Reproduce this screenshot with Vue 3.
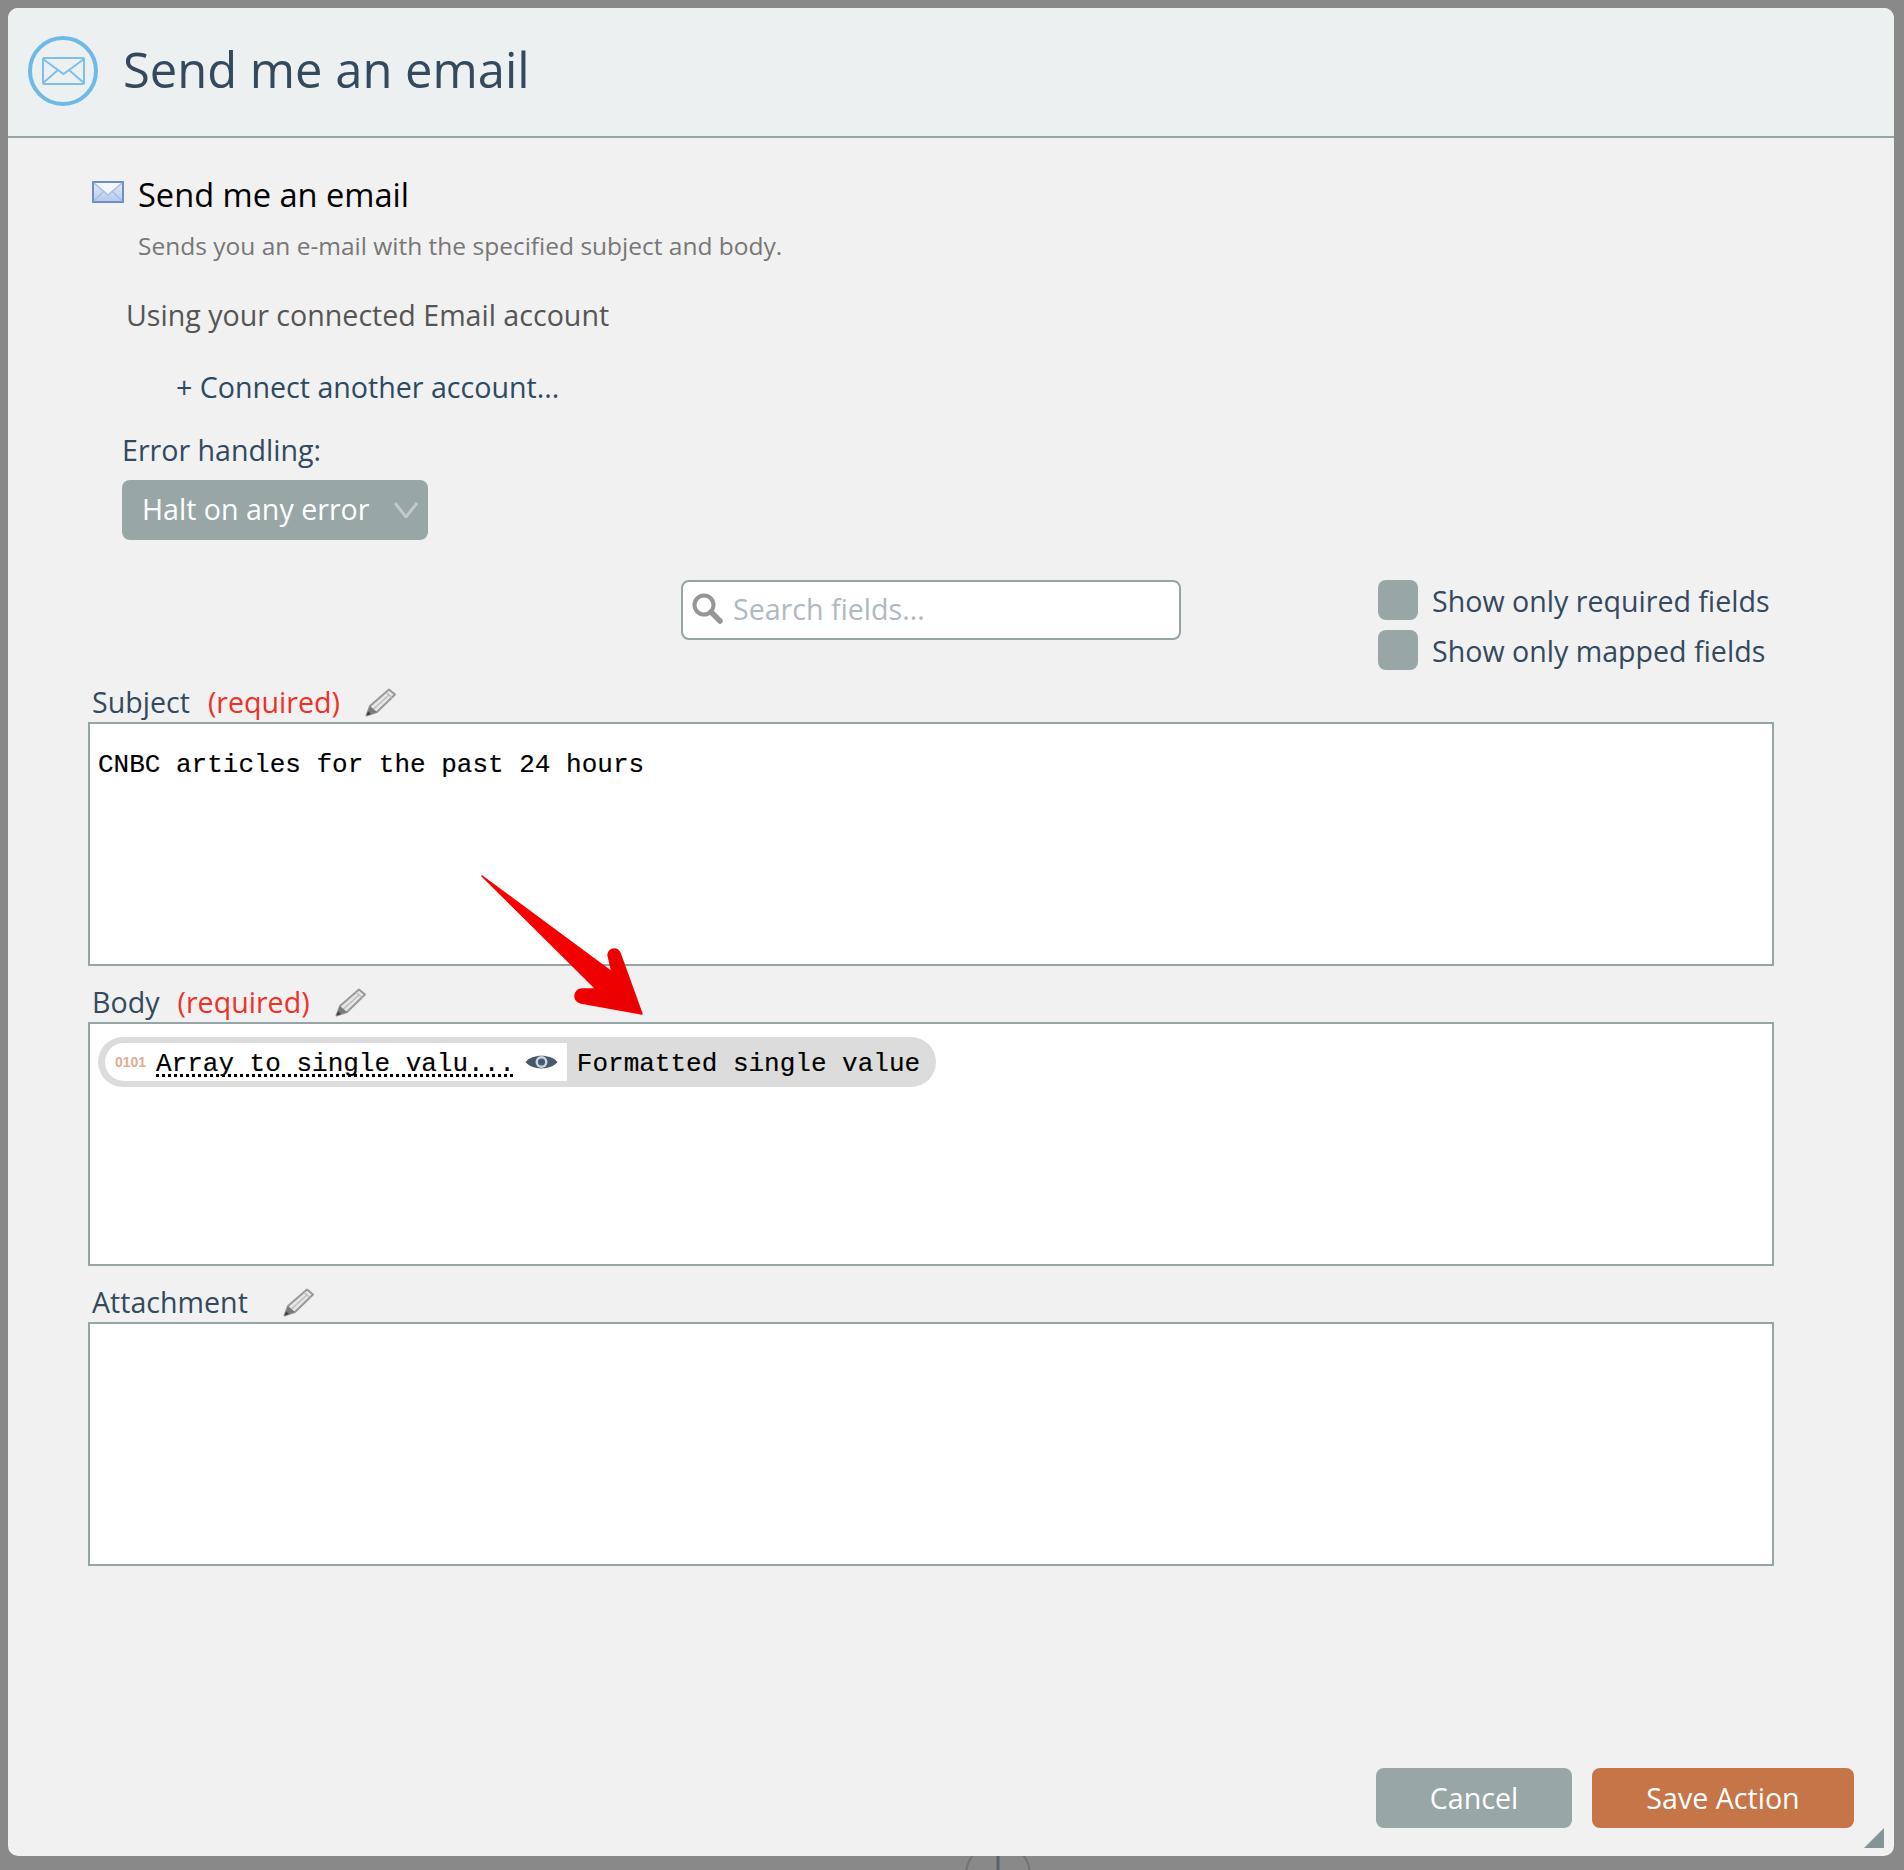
<script setup>
const fields = [
  { name: 'Subject', required: true, text: 'CNBC articles for the past 24 hours' },
  { name: 'Body', required: true, pill: true },
  { name: 'Attachment', required: false },
]
</script>

<template>
  <div class="page">
    <svg class="peek" viewBox="0 0 80 60" aria-hidden="true">
      <circle cx="40" cy="34" r="32" fill="none" stroke="#6d7376" stroke-width="2" />
      <path d="M40 14V40" stroke="#596269" stroke-width="3" />
    </svg>
    <main class="modal">
      <header class="head">
        <span class="head-icon">
          <svg width="43" height="28" viewBox="0 0 43 28" fill="none" stroke="#7cc0ea" stroke-width="2">
            <rect x="1" y="1" width="41" height="26" rx="1" />
            <path d="M1 2 21.500 17 42 2M1 26 16 13M42 26 27 13" />
          </svg>
        </span>
        <h1 class="title">Send me an email</h1>
      </header>

      <div class="action">
        <svg class="env" width="32" height="22" viewBox="0 0 32 22">
          <defs>
            <linearGradient id="envfill" x1="0" y1="0" x2="0" y2="1">
              <stop offset="0" stop-color="#e4ecfb" />
              <stop offset="1" stop-color="#b4c9ee" />
            </linearGradient>
          </defs>
          <rect x="1" y="1" width="30" height="20" fill="url(#envfill)" stroke="#6f8fc4" stroke-width="2" />
          <path d="M2 2 16 14 30 2Z" fill="#f4f7fe" />
          <path d="M2 2 16 14 30 2M2 20 12 10M30 20 20 10" fill="none" stroke="#a5bce6" stroke-width="1.400" />
        </svg>
        <span>Send me an email</span>
      </div>
      <p class="desc">Sends you an e-mail with the specified subject and body.</p>
      <p class="using">Using your connected Email account</p>
      <p class="connect">+ Connect another account...</p>
      <p class="err">Error handling:</p>
      <div class="select">
        <span class="select-text">Halt on any error</span>
        <svg width="24" height="16" viewBox="0 0 24 16" fill="none" stroke="#c3c8c8" stroke-width="3">
          <path d="M1 1 12 15 23 1" />
        </svg>
      </div>

      <div class="tools">
        <div class="search">
          <svg width="31" height="31" viewBox="0 0 31 31" fill="none" class="glass">
            <circle cx="12" cy="12" r="9.500" stroke="#969696" stroke-width="4" />
            <path d="M19 19 28 28" stroke="#969696" stroke-width="5.500" stroke-linecap="round" />
          </svg>
          <input class="search-input" placeholder="Search fields..." />
        </div>
        <div class="checks">
          <label class="check"><span class="box"></span><span class="check-text">Show only required fields</span></label>
          <label class="check"><span class="box"></span><span class="check-text">Show only mapped fields</span></label>
        </div>
      </div>

      <section class="fields">
        <div v-for="f in fields" :key="f.name" class="field">
          <div class="label">
            <span>{{ f.name }}</span>
            <span v-if="f.required" class="req">(required)</span>
            <svg :class="['pencil', { wide: !f.required }]" width="31" height="29" viewBox="0 0 31 29">
              <path d="M24 1.500 30 6.500 12 24 1.500 27.500 5 18Z" fill="#e6e6e6" stroke="#999" stroke-width="2" stroke-linejoin="round" />
              <path d="M21 4.500 27 9.500M8.500 21 24.500 6.500" fill="none" stroke="#bbb" stroke-width="1.400" />
              <path d="M5 18 12 24 1.500 27.500Z" fill="#7a7a7a" />
              <path d="M1.500 27.500 3 23.500 6 26Z" fill="#3c3c3c" />
            </svg>
          </div>
          <div class="input">
            <span v-if="f.text" class="plain">{{ f.text }}</span>
            <span v-if="f.pill" class="pill">
              <span class="pill-in">
                <span class="bits">0101</span>
                <span class="pill-name">Array to single valu...</span>
                <svg class="eye" width="33" height="18" viewBox="0 0 33 18">
                  <path d="M0.500 9C7 0.500 26 0.500 32.500 9 26 17.500 7 17.500 0.500 9Z" fill="#46596f" />
                  <circle cx="16.500" cy="9" r="6" fill="#c9d3dc" />
                  <circle cx="16.500" cy="9" r="3.500" fill="#46596f" />
                </svg>
              </span>
              <span class="pill-out">Formatted single value</span>
            </span>
          </div>
        </div>
      </section>

      <footer class="foot">
        <button class="btn cancel">Cancel</button>
        <button class="btn save">Save Action</button>
      </footer>
      <span class="resize"></span>

      <svg class="arrow" viewBox="470 870 180 150" aria-hidden="true">
        <defs>
          <linearGradient id="arrowfill" x1="0" y1="0" x2="1" y2="1">
            <stop offset="0" stop-color="#ff0000" />
            <stop offset="1" stop-color="#e80000" />
          </linearGradient>
        </defs>
        <path d="M482 876 612 972 608 955Q609 949 614 949 618 949 620 953L642 1014 581 1003Q575 1001 575 996 576 989 582 989L596 989Z" fill="url(#arrowfill)" stroke="#f40000" stroke-width="1.500" stroke-linejoin="round" />
      </svg>
    </main>
  </div>
</template>

<style>
html, body { margin: 0; background: #898989; }
</style>

<style scoped>
.page {
  position: relative;
  height: 1870px;
  box-sizing: border-box;
  padding: 8px 10px 0 8px;
  overflow: hidden;
  font-family: "Open Sans", sans-serif;
  font-size: 28.600px;
  color: #34495e;
}
.peek {
  position: absolute;
  left: 958px;
  top: 1841px;
  width: 80px;
  height: 60px;
}
.modal {
  position: relative;
  display: flex;
  flex-direction: column;
  height: 1848px;
  background: #f1f1f1;
  border-radius: 10px;
}
.head {
  display: flex;
  align-items: center;
  height: 128px;
  padding-left: 20px;
  background: #ecf0f1;
  border-bottom: 2px solid #95a5a6;
  border-radius: 10px 10px 0 0;
}
.head-icon {
  display: flex;
  align-items: center;
  justify-content: center;
  box-sizing: border-box;
  width: 70px;
  height: 70px;
  margin-bottom: 2px;
  border: 4px solid #6fb9e8;
  border-radius: 50%;
}
.title {
  margin: 0 0 6px 25px;
  font-size: 48.900px;
  font-weight: 400;
  line-height: 64px;
  color: #34495e;
}
.action {
  display: flex;
  align-items: center;
  gap: 14px;
  margin-top: 37px;
  padding-left: 84px;
  font-size: 32.600px;
  line-height: 40px;
  color: #000;
}
.env { flex: none; margin-top: -6px; }
.desc {
  margin: 14px 0 0;
  padding-left: 130px;
  font-size: 24.500px;
  line-height: 34px;
  color: #777;
}
.using {
  margin: 32px 0 0;
  padding-left: 118px;
  line-height: 40px;
  color: #555;
}
.connect {
  margin: 32px 0 0;
  padding-left: 168px;
  line-height: 40px;
  color: #2c4a62;
}
.err {
  margin: 23px 0 0;
  padding-left: 114px;
  line-height: 40px;
}
.select {
  display: flex;
  align-items: center;
  justify-content: space-between;
  box-sizing: border-box;
  width: 306px;
  height: 60px;
  margin: 10px 0 0 114px;
  padding: 0 10px 0 20px;
  background: #98a6a6;
  border-radius: 8px;
  color: #fff;
}
.select-text { padding-bottom: 3px; }
.tools {
  display: flex;
  height: 90px;
  margin-top: 40px;
  padding-left: 673px;
}
.search {
  position: relative;
  width: 500px;
  height: 60px;
}
.glass {
  position: absolute;
  left: 11px;
  top: 13px;
}
.search-input {
  box-sizing: border-box;
  width: 100%;
  height: 100%;
  padding: 0 12px 4px 50px;
  background: #fff;
  border: 2px solid #95a5a6;
  border-radius: 8px;
  outline: none;
  font-family: "Open Sans", sans-serif;
  font-size: 28.600px;
  color: #34495e;
}
.search-input::placeholder { color: #b0b9c2; opacity: 1; }
.checks {
  display: flex;
  flex-direction: column;
  gap: 10px;
  margin-left: 197px;
}
.check {
  display: flex;
  align-items: center;
  gap: 14px;
  height: 40px;
}
.check-text { padding-top: 1px; }
.box {
  width: 40px;
  height: 40px;
  background: #98a6a6;
  border-radius: 8px;
}
.fields {
  display: flex;
  flex-direction: column;
  gap: 4px;
  padding: 0 120px 0 80px;
}
.label {
  display: flex;
  align-items: center;
  box-sizing: border-box;
  height: 52px;
  padding: 10px 0 0 4px;
}
.req { margin-left: 18px; color: #ee3124; }
.pencil { margin-left: 25px; margin-top: 3px; }
.pencil.wide { margin-left: 35px; }
.input {
  box-sizing: border-box;
  height: 244px;
  padding: 13px 8px;
  background: #fff;
  border: 2px solid #95a5a6;
  font-family: "Liberation Mono", monospace;
  font-size: 26px;
  line-height: 50px;
  color: #000;
  -webkit-text-stroke: 0.15px #000;
}
.plain { display: block; padding-top: 3px; }
.pill {
  display: flex;
  align-items: center;
  width: fit-content;
  height: 50px;
  padding: 0 16px 0 7px;
  background: #dcdcdc;
  border-radius: 25px;
  white-space: nowrap;
}
.pill-in {
  display: flex;
  align-items: center;
  height: 38px;
  padding: 0 9px 0 10px;
  background: #fff;
  border-radius: 19px 0 0 19px;
}
.bits {
  width: 41px;
  font-family: "Liberation Sans", sans-serif;
  font-size: 14px;
  font-weight: 700;
  color: #e3ab93;
  -webkit-text-stroke: 0;
}
.pill-name {
  padding-top: 3px;
  line-height: 30px;
  text-decoration: underline dotted 3px #000;
  text-underline-offset: 3px;
  text-decoration-skip-ink: none;
}
.eye { margin-left: 10px; }
.pill-out { margin-left: 10px; padding-top: 3px; line-height: 30px; }
.foot {
  display: flex;
  justify-content: flex-end;
  gap: 20px;
  margin-top: auto;
  padding: 0 40px 28px 0;
}
.btn {
  height: 60px;
  padding: 0 0 2px;
  border: 0;
  border-radius: 8px;
  font-family: "Open Sans", sans-serif;
  font-size: 28.600px;
  color: #fff;
}
.cancel { width: 196px; background: #98a6a6; }
.save { width: 262px; background: #c67548; }
.resize {
  position: absolute;
  right: 10px;
  bottom: 8px;
  width: 20px;
  height: 20px;
  background: #839596;
  clip-path: polygon(100% 0, 100% 100%, 0 100%);
}
.arrow {
  position: absolute;
  left: 462px;
  top: 862px;
  width: 180px;
  height: 150px;
}
</style>
